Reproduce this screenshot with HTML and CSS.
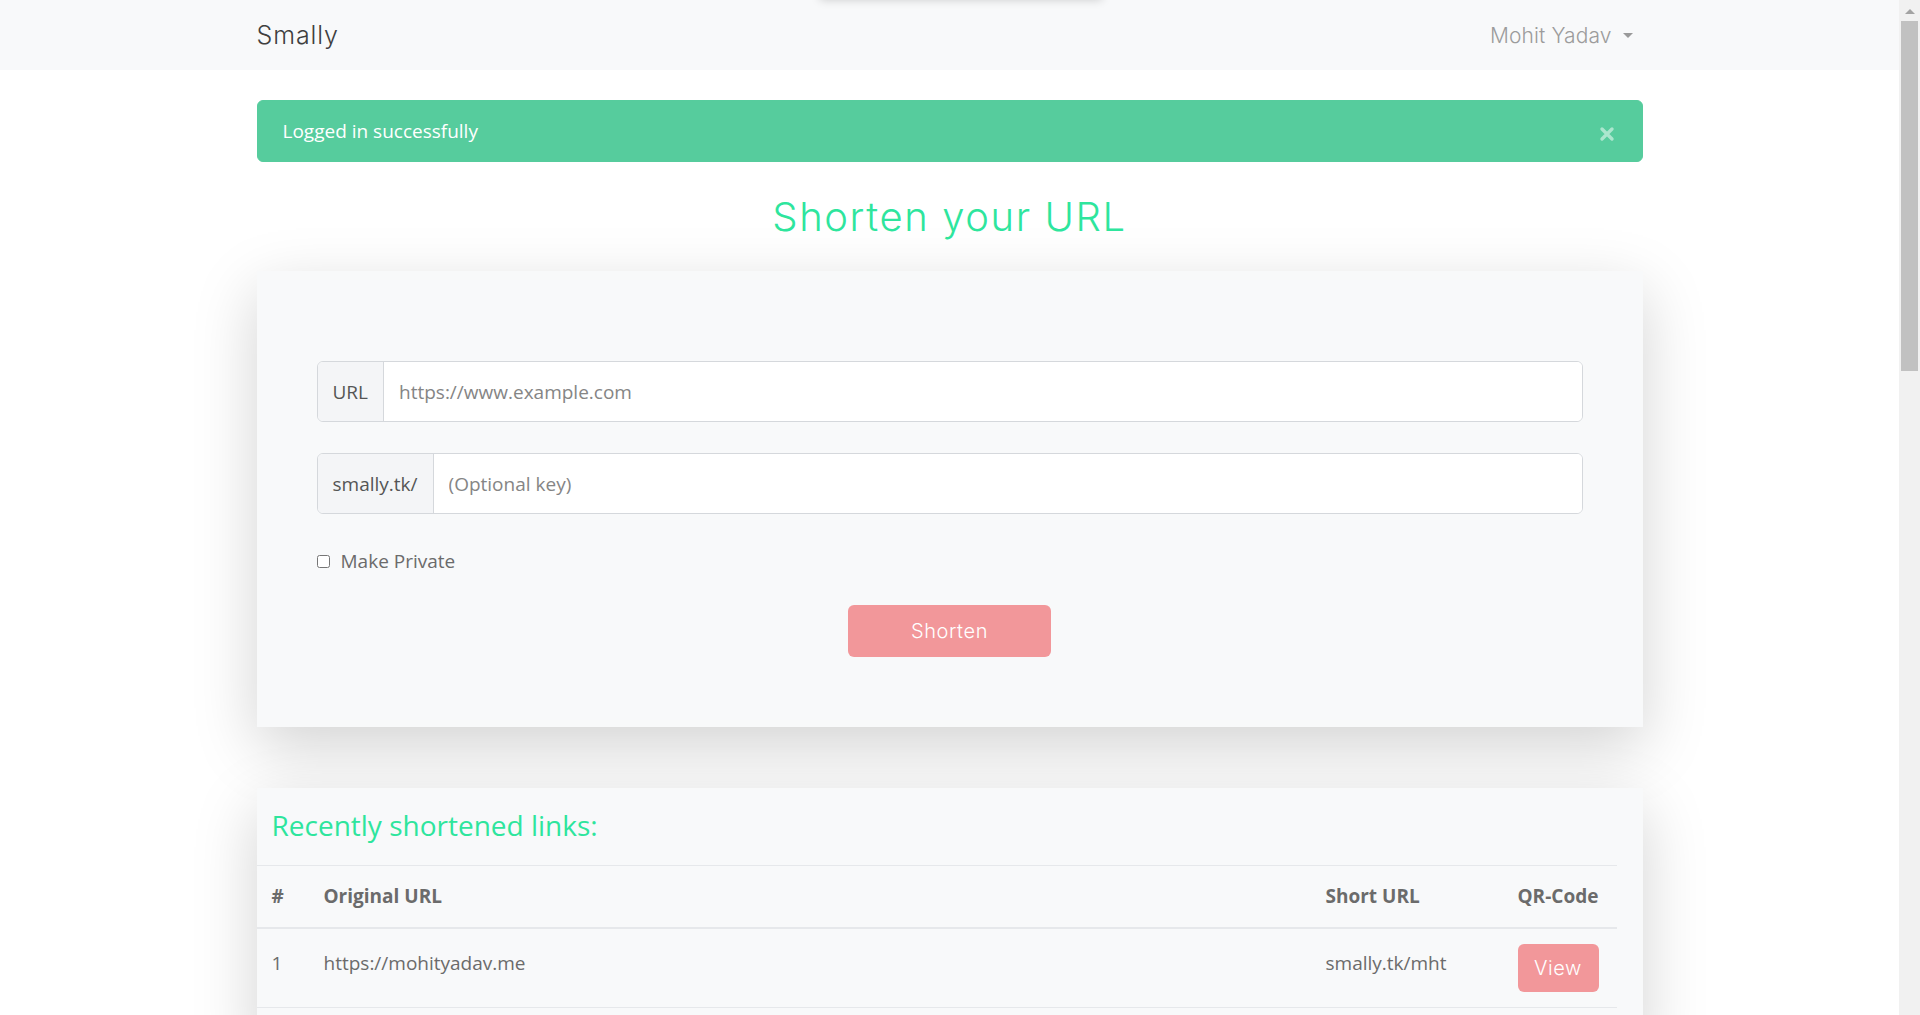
FILE: index.html
```html
<!DOCTYPE html>
<html lang="en">
<head>
<meta charset="utf-8">
<title>Smally</title>
<link rel="stylesheet" href="styles.css">
</head>
<body>
<div class="viewport">
  <div class="topshade"></div>
  <nav class="navbar">
    <div class="nav-inner">
      <a class="brand" href="#">Smally</a>
      <div class="user">Mohit Yadav<span class="caret"></span></div>
    </div>
  </nav>
  <main class="container">
    <div class="alert">
      <span>Logged in successfully</span>
      <button class="close" type="button" aria-label="Close">
        <svg width="16" height="16" viewBox="0 0 16 16"><path d="M3 3 L13 13 M13 3 L3 13" stroke="currentColor" stroke-width="3.4" stroke-linecap="round" fill="none"/></svg>
      </button>
    </div>
    <h1 class="title">Shorten your URL</h1>
    <section class="card form-card">
      <div class="input-group">
        <span class="addon">URL</span>
        <input class="field" type="text" placeholder="https://www.example.com">
      </div>
      <div class="input-group second">
        <span class="addon">smally.tk/</span>
        <input class="field" type="text" placeholder="(Optional key)">
      </div>
      <label class="check"><input class="box" type="checkbox">Make Private</label>
      <div class="actions"><button class="btn-pink btn-shorten" type="button">Shorten</button></div>
    </section>
    <section class="card links-card">
      <h3 class="links-title">Recently shortened links:</h3>
      <table class="links">
        <colgroup><col class="c-num"><col class="c-orig"><col class="c-short"><col class="c-qr"></colgroup>
        <thead>
          <tr><th>#</th><th>Original URL</th><th>Short URL</th><th>QR-Code</th></tr>
        </thead>
        <tbody>
          <tr><td>1</td><td>https://mohityadav.me</td><td>smally.tk/mht</td><td class="btn-cell"><button class="btn-pink btn-view" type="button">View</button></td></tr>
        </tbody>
      </table>
    </section>
  </main>
</div>
<div class="scrollbar"><span class="arrow"></span><span class="thumb"></span></div>
</body>
</html>
```
FILE: styles.css
```css
html, body { margin: 0; height: 100%; }
body {
  display: flex;
  overflow: hidden;
  background: #fff;
  font-family: "Open Sans", "Noto Sans", sans-serif;
  color: #6b6b6b;
}
.viewport { flex: 1; min-width: 0; position: relative; overflow: hidden; }
.topshade {
  position: absolute; top: -30px; left: 820px; width: 282px; height: 30px;
  background: #f8f9fa; box-shadow: 0 0 10px rgba(0,0,0,.18); z-index: 2;
}
.scrollbar { width: 21px; flex: none; background: #f1f1f1; display: flex; flex-direction: column; align-items: center; }
.arrow { margin-top: 9px; width: 0; height: 0; border-left: 5px solid transparent; border-right: 5px solid transparent; border-bottom: 5px solid #a3a3a3; }
.thumb { margin-top: 7px; width: 17px; height: 350px; background: #c1c1c1; }

.navbar { height: 70px; background: #f8f9fa; }
.nav-inner { width: 1386px; margin: 0 auto; height: 100%; display: flex; align-items: center; justify-content: space-between; }
.brand { font-family: "Inter", sans-serif; font-weight: 300; font-size: 25px; letter-spacing: 0.9px; color: #3f3f3f; text-decoration: none; }
.user { font-family: "Inter", sans-serif; font-weight: 300; font-size: 21px; letter-spacing: 0.1px; color: #9c9c9c; display: flex; align-items: center; margin-right: 10px; }
.caret { margin-left: 11px; width: 0; height: 0; border-left: 5px solid transparent; border-right: 5px solid transparent; border-top: 5px solid #9a9a9a; }

.container { width: 1386px; margin: 0 auto; }
.alert {
  margin-top: 30px; height: 62px; box-sizing: border-box;
  background: #56cc9d; border: 1px solid #56cc9d; border-radius: 6px;
  color: #fff; font-size: 19px;
  padding: 0 27px 0 25px;
  display: flex; align-items: center; justify-content: space-between;
}
.close { background: none; border: 0; padding: 0; margin-top: 5px; color: rgba(255,255,255,.5); display: flex; }
.title { margin: 31px 0 30px; font-family: "Inter", sans-serif; font-weight: 300; font-size: 40px; line-height: 48px; letter-spacing: 1.6px; color: #2ee59d; text-align: center; }

.card { background: #f8f9fa; box-shadow: 0 20px 60px rgba(0,0,0,.175); }
.form-card { padding: 90px 60px 70px; }
.input-group { display: flex; height: 61px; box-sizing: border-box; border: 1px solid #d5d8dc; border-radius: 6px; overflow: hidden; background: #fff; }
.input-group.second { margin-top: 31px; }
.addon { background: #f4f5f7; border-right: 1px solid #d5d8dc; padding: 0 15px; display: flex; align-items: center; font-size: 19px; color: #555; }
.field { flex: 1; border: 0; padding: 0 16px 0 15px; font-size: 19px; font-family: inherit; background: #fff; outline: none; color: #555; }
.field::placeholder { color: #858585; }
.check { display: flex; align-items: center; margin-top: 32px; height: 30px; font-size: 19px; color: #6b6b6b; }
.box { width: 13px; height: 13px; margin: 0 11px 0 0; }
.actions { display: flex; justify-content: center; margin-top: 29px; }
.btn-pink { background: #f2979a; color: #fff; border: 0; border-radius: 6px; font-family: "Inter", sans-serif; font-weight: 300; font-size: 20px; letter-spacing: 0.6px; padding: 0; }
.btn-shorten { width: 203px; height: 52px; }

.links-card { margin-top: 61px; padding: 19px 26px 40px 0; }
.links-title { margin: 0 0 21px; padding-left: 15px; font-weight: 400; font-size: 28px; line-height: 37px; color: #2ee59d; }
.links { width: 1360px; table-layout: fixed; border-collapse: separate; border-spacing: 0; font-size: 19px; color: #6b6b6b; }
.c-num { width: 52px; }
.c-short { width: 192px; }
.c-qr { width: 114px; }
.links th { text-align: left; font-weight: 700; padding: 15px; line-height: 31px; white-space: nowrap; border-top: 1px solid #e6e8eb; border-bottom: 2px solid #e6e8eb; vertical-align: middle; }
.links td { padding: 10px 15px 20px; line-height: 30px; white-space: nowrap; border-bottom: 1px solid #e6e8eb; vertical-align: middle; }
.links td.btn-cell { padding: 15px; }
.btn-view { width: 81px; height: 48px; display: block; }
```
